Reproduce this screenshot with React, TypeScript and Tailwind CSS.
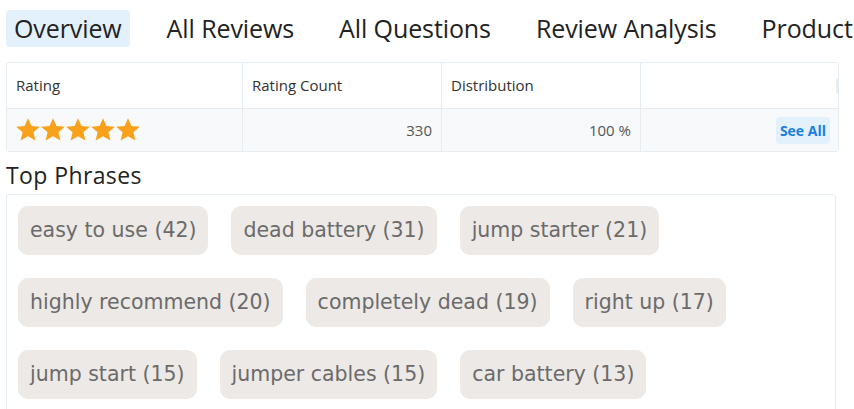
const tabs = ["Overview", "All Reviews", "All Questions", "Review Analysis", "Product Details"];

const phrases = [
  ["easy to use (42)", "dead battery (31)", "jump starter (21)"],
  ["highly recommend (20)", "completely dead (19)", "right up (17)"],
  ["jump start (15)", "jumper cables (15)", "car battery (13)"],
];

const Star = () => (
  <svg viewBox="0 0 24 24" className="w-[26px] h-[26px] -mx-[0.6px]" fill="#f9a11b">
    <path d="M12 1.2l3.15 7.2 7.75.6-5.9 5.1 1.85 7.6L12 17.7l-6.85 4 1.85-7.6-5.9-5.1 7.75-.6z" />
  </svg>
);

export default function App() {
  return (
    <div className="w-[854px] h-[409px] overflow-hidden bg-white font-['Open_Sans',sans-serif] text-[#222]">
      <div className="flex items-center gap-[29px] pl-[6px] pt-[10px] whitespace-nowrap">
        {tabs.map((t, i) => (
          <div
            key={t}
            className={`h-[37px] px-[8px] flex items-center rounded-[4px] text-[25px] tracking-[-0.1px] ${
              i === 0 ? "bg-[#e3f1fd]" : ""
            }`}
          >
            {t}
          </div>
        ))}
      </div>

      <div className="mx-[6px] mt-[15px] w-[833px] border border-[#e6edf2] rounded-[3px] text-[15px] text-[#333]">
        <div className="grid grid-cols-[236px_199px_199px_1fr] h-[45px]">
          <div className="flex items-center px-[9px] border-r border-[#e6edf2]">Rating</div>
          <div className="flex items-center px-[9px] border-r border-[#e6edf2]">Rating Count</div>
          <div className="flex items-center px-[9px] border-r border-[#e6edf2]">Distribution</div>
          <div className="flex items-center justify-end">
            <div className="w-[2px] h-[14px] bg-[#e6edf2]" />
          </div>
        </div>
        <div className="grid grid-cols-[236px_199px_199px_1fr] h-[43px] bg-[#f7f9fb] border-t border-[#e6edf2] text-[#555]">
          <div className="flex items-center px-[9px] border-r border-[#e6edf2]">
            <Star />
            <Star />
            <Star />
            <Star />
            <Star />
          </div>
          <div className="flex items-center justify-end px-[9px] border-r border-[#e6edf2]">330</div>
          <div className="flex items-center justify-end px-[9px] border-r border-[#e6edf2]">100 %</div>
          <div className="flex items-center justify-end pr-[8px]">
            <button className="h-[27px] px-[4px] rounded-[4px] bg-[#e3f1fd] text-[#1a7fe0] font-bold text-[14px]">
              See All
            </button>
          </div>
        </div>
      </div>

      <div className="pl-[6px] mt-[9px] text-[23px] leading-[28px] tracking-[0.4px] text-[#222]">Top Phrases</div>

      <div className="mx-[6px] mt-[5px] w-[830px] h-[260px] border border-[#e6edf2] rounded-[3px] p-[11px] flex flex-col gap-[23px]">
        {phrases.map((row, r) => (
          <div key={r} className="flex gap-[23px]">
            {row.map((p) => (
              <div
                key={p}
                className="h-[49px] px-[12px] flex items-center rounded-[10px] bg-[#ede9e6] text-[#6b6b6b] text-[20.5px] font-['DejaVu_Sans',sans-serif] whitespace-nowrap"
              >
                {p}
              </div>
            ))}
          </div>
        ))}
      </div>
    </div>
  );
}
